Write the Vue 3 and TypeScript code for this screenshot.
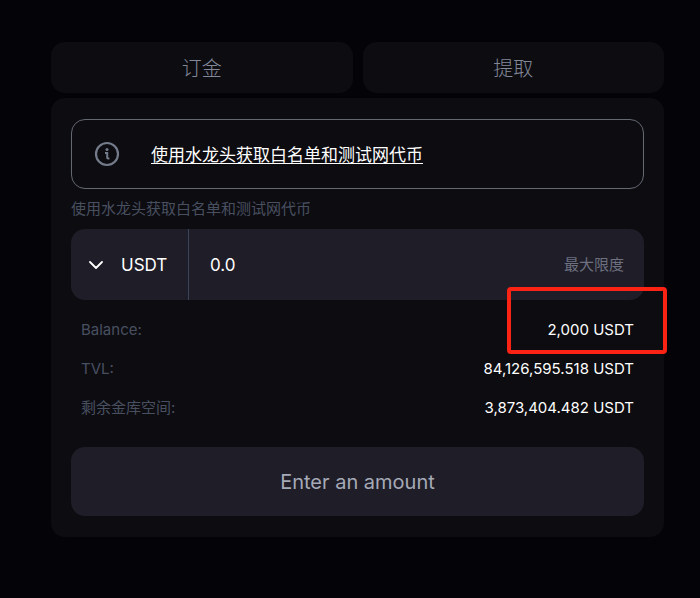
<script setup lang="ts">
import { ref } from 'vue'

interface Stat {
  label: string
  value: string
  highlighted?: boolean
}

const tabs: string[] = ['订金', '提取']
const activeTab = ref(0)
const token = ref('USDT')
const amount = ref('0.0')

const stats: Stat[] = [
  { label: 'Balance:', value: '2,000 USDT', highlighted: true },
  { label: 'TVL:', value: '84,126,595.518 USDT' },
  { label: '剩余金库空间:', value: '3,873,404.482 USDT' },
]
</script>

<template>
  <main class="vault">
    <nav class="tabs">
      <button
        v-for="(tab, index) in tabs"
        :key="tab"
        type="button"
        class="tab"
        :aria-pressed="activeTab === index"
        @click="activeTab = index"
      >
        {{ tab }}
      </button>
    </nav>

    <section class="card">
      <div class="notice">
        <svg class="info" viewBox="0 0 26 26" fill="none" aria-hidden="true">
          <circle cx="13" cy="13" r="11" stroke="currentColor" stroke-width="2.2" />
          <circle cx="13" cy="8.4" r="1.5" fill="currentColor" />
          <path d="M11 12h2.2v5.4M13.2 16.4q0 1 1 1h1.2" stroke="currentColor" stroke-width="2" />
        </svg>
        <a class="notice-link" href="#faucet">使用水龙头获取白名单和测试网代币</a>
      </div>

      <label class="hint" for="amount">使用水龙头获取白名单和测试网代币</label>

      <div class="field">
        <div class="token">
          <svg class="chevron" viewBox="0 0 14 8" fill="none" aria-hidden="true">
            <path d="M1 1l6 6 6-6" stroke="currentColor" stroke-width="1.8" stroke-linecap="round" stroke-linejoin="round" />
          </svg>
          <select v-model="token" class="token-select" aria-label="USDT">
            <option>USDT</option>
          </select>
        </div>
        <input id="amount" v-model="amount" class="amount" type="text" inputmode="decimal" />
        <button type="button" class="max">最大限度</button>
      </div>

      <dl class="stats">
        <div v-for="stat in stats" :key="stat.label" class="stat">
          <dt>{{ stat.label }}</dt>
          <dd :class="{ highlighted: stat.highlighted }">{{ stat.value }}</dd>
        </div>
      </dl>

      <button type="button" class="submit">Enter an amount</button>
    </section>
  </main>
</template>

<style>
body {
  margin: 0;
  background: #040308;
}
</style>

<style scoped>
.vault {
  box-sizing: border-box;
  padding: 42px 36px 60px 51px;
  font-family: Inter, "Noto Sans CJK SC", sans-serif;
  color: #fff;
}

button,
input,
select {
  margin: 0;
  padding: 0;
  border: 0;
  background: transparent;
  color: inherit;
  font: inherit;
}

button {
  cursor: pointer;
}

.tabs {
  display: grid;
  grid-template-columns: 1fr 1fr;
  gap: 10px;
}

.tab {
  height: 51px;
  border-radius: 14px;
  background: #0d0c11;
  color: #828999;
  font-size: 20px;
  font-weight: 300;
}

.card {
  display: flex;
  flex-direction: column;
  margin-top: 5px;
  padding: 21px 20px;
  border-radius: 14px;
  background: #0d0c11;
}

.notice {
  display: flex;
  align-items: center;
  gap: 31px;
  box-sizing: border-box;
  height: 70px;
  padding: 0 22px;
  border: 1px solid #646873;
  border-radius: 14px;
}

.info {
  width: 26px;
  height: 26px;
  color: #747b8b;
}

.notice-link {
  padding-bottom: 2px;
  color: #fff;
  font-size: 17px;
  text-underline-offset: 2px;
}

.hint {
  height: 40px;
  color: #485060;
  font-size: 15px;
  line-height: 40px;
}

.field {
  display: flex;
  height: 71px;
  border-radius: 14px;
  background: #1f1d27;
}

.token {
  display: flex;
  align-items: center;
  gap: 18px;
  padding: 0 20px 0 18px;
  border-right: 1px solid #3b4456;
}

.chevron {
  width: 14px;
  height: 8px;
}

.token-select {
  appearance: none;
  font-size: 17px;
}

.amount {
  flex: 1;
  min-width: 0;
  padding-left: 21px;
  font-size: 17px;
}

.max {
  padding: 0 20px 2px;
  color: #6c7080;
  font-size: 15px;
}

.stats {
  display: flex;
  flex-direction: column;
  gap: 19px;
  margin: 0;
  padding: 20px 10px 29px;
}

.stat {
  display: flex;
  justify-content: space-between;
  font-size: 15px;
  line-height: 20px;
}

.stat dt {
  color: #485060;
}

.stat dd {
  position: relative;
  margin: 0;
}

.highlighted::after {
  content: "";
  position: absolute;
  inset: -33px -33px -14px -40px;
  border: 4px solid #fb2314;
  border-radius: 4px;
  pointer-events: none;
}

.submit {
  height: 69px;
  border-radius: 14px;
  background: #1f1d27;
  color: #a5aab7;
  font-size: 20px;
}
</style>
